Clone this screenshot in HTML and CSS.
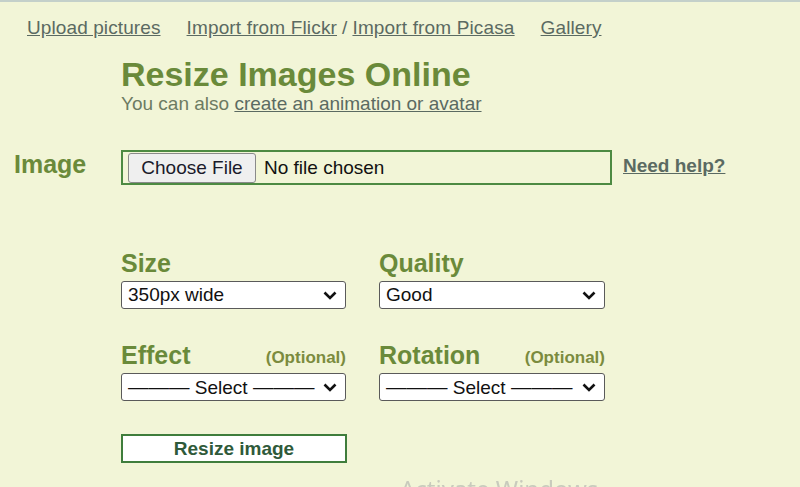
FILE: index.html
```html
<!DOCTYPE html>
<html lang="en">
<head>
<meta charset="utf-8">
<title>Resize Images Online</title>
<link rel="stylesheet" href="styles.css">
</head>
<body>
<div class="topbar"></div>
<nav class="nav">
  <a href="#" class="nav-link">Upload pictures</a>
  <span class="nav-group"><a href="#" class="nav-link">Import from Flickr</a><span class="slash">/</span><a href="#" class="nav-link">Import from Picasa</a></span>
  <a href="#" class="nav-link">Gallery</a>
</nav>
<header class="head">
  <h1 class="title">Resize Images Online</h1>
  <p class="subtitle">You can also <a href="#" class="sublink">create an animation or avatar</a></p>
</header>
<div class="image-row">
  <div class="row-label">Image</div>
  <div class="filebox">
    <span class="file-btn">Choose File</span>
    <span class="file-name">No file chosen</span>
  </div>
  <a href="#" class="help">Need help?</a>
</div>
<div class="options">
  <div class="field">
    <div class="field-head"><span class="field-label">Size</span></div>
    <div class="select"><span class="select-text">350px wide</span><svg class="chev" width="14" height="9" viewBox="0 0 14 9"><path d="M1.5 1.5 L7 7 L12.5 1.5" fill="none" stroke="#111" stroke-width="2.6"/></svg></div>
  </div>
  <div class="field">
    <div class="field-head"><span class="field-label">Quality</span></div>
    <div class="select"><span class="select-text">Good</span><svg class="chev" width="14" height="9" viewBox="0 0 14 9"><path d="M1.5 1.5 L7 7 L12.5 1.5" fill="none" stroke="#111" stroke-width="2.6"/></svg></div>
  </div>
  <div class="field">
    <div class="field-head"><span class="field-label">Effect</span><span class="optional">(Optional)</span></div>
    <div class="select"><span class="select-text"><span class="dash">———</span> Select <span class="dash">———</span></span><svg class="chev" width="14" height="9" viewBox="0 0 14 9"><path d="M1.5 1.5 L7 7 L12.5 1.5" fill="none" stroke="#111" stroke-width="2.6"/></svg></div>
  </div>
  <div class="field">
    <div class="field-head"><span class="field-label">Rotation</span><span class="optional">(Optional)</span></div>
    <div class="select"><span class="select-text"><span class="dash">———</span> Select <span class="dash">———</span></span><svg class="chev" width="14" height="9" viewBox="0 0 14 9"><path d="M1.5 1.5 L7 7 L12.5 1.5" fill="none" stroke="#111" stroke-width="2.6"/></svg></div>
  </div>
  <div class="field">
    <button class="resize-btn">Resize image</button>
  </div>
</div>
<div class="watermark">Activate Windows</div>
</body>
</html>
```

FILE: styles.css
```css
html, body {
  margin: 0;
  padding: 0;
}
body {
  background: #f2f5d7;
  font-family: "Liberation Sans", Arial, sans-serif;
  font-size: 19px;
  color: #000;
  overflow: hidden;
  height: 487px;
}
.topbar {
  height: 2px;
  background: #c4d0ca;
}
.nav {
  display: flex;
  gap: 26px;
  margin: 15px 0 0 27px;
  line-height: 22px;
  color: #5b6a62;
  letter-spacing: 0.1px;
}
.nav-link {
  color: #5b6a62;
  text-decoration: underline;
}
.slash {
  margin: 0 5px;
}
.nav-group {
  letter-spacing: 0.15px;
}
.head {
  margin-left: 121px;
}
.title {
  margin: 16px 0 0;
  font-size: 34px;
  line-height: 38px;
  font-weight: bold;
  color: #6a8a3a;
}
.subtitle {
  margin: 0;
  line-height: 22px;
  color: #6d7b62;
}
.sublink {
  color: #5b6a62;
}
.image-row {
  display: flex;
  align-items: flex-start;
  margin-top: 35px;
  padding-left: 14px;
}
.row-label {
  width: 107px;
  font-size: 25px;
  line-height: 28px;
  font-weight: bold;
  color: #6a8a3a;
}
.filebox {
  box-sizing: border-box;
  width: 491px;
  height: 35px;
  border: 2px solid #4d8a42;
  display: flex;
  align-items: center;
  padding-left: 5px;
}
.file-btn {
  box-sizing: border-box;
  width: 128px;
  height: 30px;
  display: flex;
  align-items: center;
  justify-content: center;
  background: #efefef;
  border: 1px solid #8a8a8a;
  border-radius: 3px;
  color: #1a1a2a;
}
.file-name {
  margin-left: 8px;
  color: #111;
}
.help {
  margin: 5px 0 0 11px;
  line-height: 22px;
  font-weight: bold;
  color: #5b6a62;
}
.options {
  display: grid;
  grid-template-columns: 225px 226px;
  column-gap: 33px;
  row-gap: 32px;
  margin: 64px 0 0 121px;
}
.field-head {
  display: flex;
  justify-content: space-between;
  align-items: flex-end;
  height: 29px;
  line-height: 29px;
}
.field-label {
  font-size: 25px;
  font-weight: bold;
  color: #6a8a3a;
}
.optional {
  font-size: 17px;
  line-height: 24px;
  font-weight: bold;
  color: #7b8b3e;
}
.select {
  box-sizing: border-box;
  margin-top: 3px;
  height: 28px;
  border: 1px solid #5a5a5a;
  border-radius: 3px;
  background: #fff;
  display: flex;
  align-items: center;
  justify-content: space-between;
  padding: 0 8px 0 6px;
  line-height: 26px;
}
.select-text {
  color: #111;
  white-space: nowrap;
}
.dash {
  font-size: 20.5px;
}
.chev {
  display: block;
}
.resize-btn {
  box-sizing: border-box;
  width: 226px;
  height: 29px;
  margin-top: 1px;
  border: 2px solid #3f7d3c;
  background: #fff;
  font-family: "Liberation Sans", Arial, sans-serif;
  font-size: 19px;
  line-height: 24px;
  font-weight: bold;
  color: #2f5a3a;
  padding: 0;
}
.watermark {
  position: fixed;
  left: 400px;
  top: 473px;
  font-family: "Noto Sans", sans-serif;
  font-size: 24px;
  line-height: 32px;
  color: #c9cbbd;
  white-space: nowrap;
}
```
